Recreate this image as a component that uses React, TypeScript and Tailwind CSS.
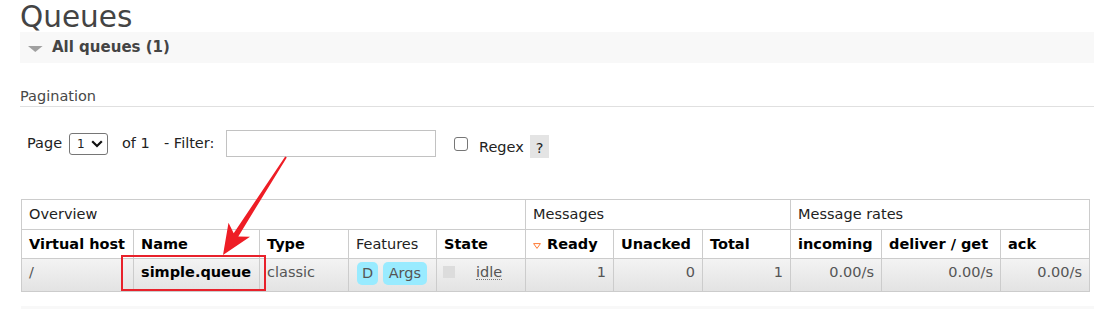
import React from "react";

const cell = "border-r border-b border-[#cccccc]";
const grpCell = `${cell} h-[30px] pt-[5px] pl-[7px] leading-[18px] text-[#222]`;
const hdCell = `${cell} h-[29px] pt-[5px] pl-[7px] leading-[18px] font-bold text-black whitespace-nowrap`;
const dCell = `${cell} h-[33px] pt-[4px] leading-[18px] bg-linear-to-b from-[#f3f3f3] to-[#e3e3e3] text-[#555] whitespace-nowrap`;

export default function App() {
  return (
    <div className="relative w-[1094px] h-[309px] overflow-hidden bg-white font-['DejaVu_Sans','Liberation_Sans',sans-serif] text-[14.5px]">
      <div className="ml-[20px]">
        <h1 className="h-[32px] text-[29.5px] leading-[34px] text-[#444] font-normal whitespace-nowrap">Queues</h1>

        <div className="h-[31px] bg-[#f8f8f8] flex items-start pl-[8px]">
          <svg className="mt-[14px]" width="15" height="6" viewBox="0 0 15 6">
            <polygon points="0,0 14.6,0 7.3,6" fill="#a0a0a0" />
          </svg>
          <span className="ml-[9px] leading-[31px] text-[15px] font-bold text-[#444]">All queues (1)</span>
        </div>

        <div className="mt-[24px] leading-[18px] pb-[1px] border-b border-[#e0e0e0] text-[#484848]">Pagination</div>

        <div className="mt-[23px] h-[28px] flex items-start text-[#222] whitespace-nowrap">
          <span className="ml-[7px] w-[42px] mt-[4px] leading-[18px]">Page</span>
          <div className="mt-[3px] h-[22px] w-[39px] border border-[#767676] rounded-[3px] flex items-center pl-[7px]">
            <span className="text-[12px] leading-[14px] text-[#222]">1</span>
            <svg className="ml-[6px]" width="12" height="8" viewBox="0 0 12 8">
              <polyline points="1.2,1.2 6,6 10.8,1.2" fill="none" stroke="#111" strokeWidth="2.2" />
            </svg>
          </div>
          <span className="ml-[14px] w-[42px] mt-[4px] leading-[18px]">of 1</span>
          <span className="w-[62px] mt-[4px] leading-[18px]">- Filter:</span>
          <div className="w-[210px] h-[27px] border border-[#c2c2c2] bg-white" />
          <div className="ml-[18px] mt-[7px] w-[14px] h-[14px] border border-[#767676] rounded-[3px] bg-white" />
          <span className="ml-[11px] w-[51px] mt-[8px] leading-[18px]">Regex</span>
          <div className="mt-[5px] w-[19px] h-[23px] bg-[#e4e4e4] flex justify-center pt-[4px] leading-[18px]">?</div>
        </div>

        <div className="mt-[41px] ml-[1px] w-[1069px] border-l border-t border-[#cccccc] grid grid-cols-[112px_126px_89px_88px_89px_88px_89px_88px_91px_119px_89px]">
          <div className={`${grpCell} col-span-5`}>Overview</div>
          <div className={`${grpCell} col-span-3`}>Messages</div>
          <div className={`${grpCell} col-span-3`}>Message rates</div>

          <div className={hdCell}>Virtual host</div>
          <div className={hdCell}>Name</div>
          <div className={hdCell}>Type</div>
          <div className={`${cell} h-[29px] pt-[5px] pl-[7px] leading-[18px] text-[#222]`}>Features</div>
          <div className={hdCell}>State</div>
          <div className={`${hdCell} flex items-start`}>
            <svg className="mt-[8px]" width="8" height="6" viewBox="0 0 8 6">
              <polygon points="0.6,0.6 7.4,0.6 4,5.4" fill="none" stroke="#ff7a33" strokeWidth="1" />
            </svg>
            <span className="ml-[6px]">Ready</span>
          </div>
          <div className={hdCell}>Unacked</div>
          <div className={hdCell}>Total</div>
          <div className={hdCell}>incoming</div>
          <div className={hdCell}>deliver / get</div>
          <div className={hdCell}>ack</div>

          <div className={`${dCell} pl-[7px]`}>/</div>
          <div className={`${dCell} pl-[7px] font-bold text-black`}>simple.queue</div>
          <div className={`${dCell} pl-[7px]`}>classic</div>
          <div className={`${cell} h-[33px] pt-[3px] pl-[8px] bg-linear-to-b from-[#f3f3f3] to-[#e3e3e3] flex items-start gap-[5px]`}>
            <span className="h-[23px] leading-[23px] px-[5px] rounded-[5px] bg-[#99ebff] text-[#555]">D</span>
            <span className="h-[23px] leading-[23px] px-[5.5px] rounded-[5px] bg-[#99ebff] text-[#555]">Args</span>
          </div>
          <div className={`${dCell} pl-[6px] flex items-start`}>
            <span className="mt-[3px] w-[12px] h-[12px] bg-[#dcdcdc]" />
            <span className="ml-[21px] h-[17px] border-b border-dotted border-[#777] leading-[18px]">idle</span>
          </div>
          <div className={`${dCell} pr-[7px] text-right`}>1</div>
          <div className={`${dCell} pr-[7px] text-right`}>0</div>
          <div className={`${dCell} pr-[7px] text-right`}>1</div>
          <div className={`${dCell} pr-[7px] text-right`}>0.00/s</div>
          <div className={`${dCell} pr-[7px] text-right`}>0.00/s</div>
          <div className={`${dCell} pr-[7px] text-right`}>0.00/s</div>
        </div>

        <div className="mt-[14px] ml-[1px] h-[31px] bg-[#f8f8f8]" />
      </div>

      <div className="absolute left-[121px] top-[255px] w-[145px] h-[36px] border-2 border-[#e8212b] pointer-events-none" />
      <svg className="absolute left-0 top-0 pointer-events-none" width="1094" height="309" viewBox="0 0 1094 309">
        <polygon
          points="223,255 250,236.8 238.3,236.4 286.8,157.4 285.2,156.6 233.7,233.2 228.5,222.8"
          fill="#ee1d25"
        />
      </svg>
    </div>
  );
}
